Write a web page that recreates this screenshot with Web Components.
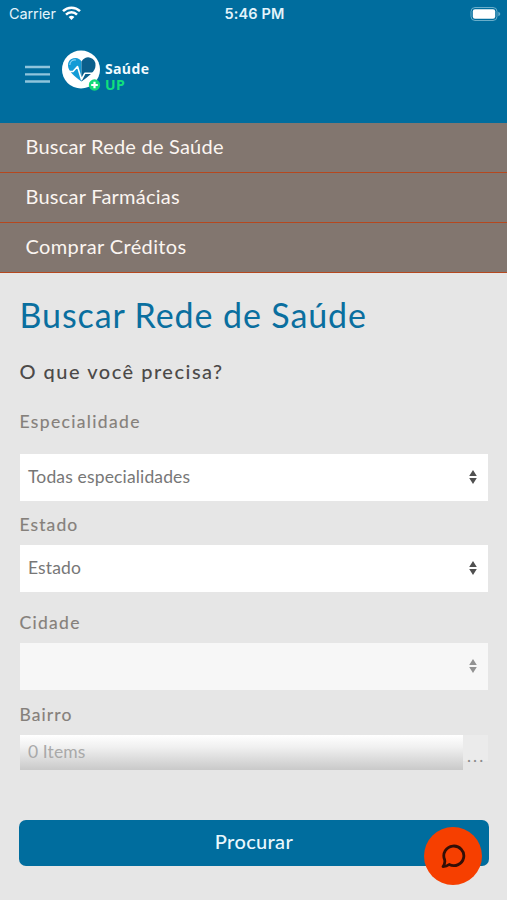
<!DOCTYPE html>
<html lang="pt-BR">
<head>
<meta charset="utf-8">
<meta name="viewport" content="width=device-width, initial-scale=1">
<title>Saúde UP</title>
<style>
body {
	margin: 0;
	background-color: #e6e6e6;
	font-family: Lato, "Open Sans", sans-serif;
}
</style>
</head>
<body>
<app-screen>
	<status-bar slot="top" carrier="Carrier" time="5:46 PM"></status-bar>
	<app-header slot="top"></app-header>
	<nav-menu slot="top">
		<nav-item style="letter-spacing: 0.22px">Buscar Rede de Saúde</nav-item>
		<nav-item style="letter-spacing: 0.25px">Buscar Farmácias</nav-item>
		<nav-item style="letter-spacing: 0.38px">Comprar Créditos</nav-item>
	</nav-menu>
	<search-form heading="Buscar Rede de Saúde" question="O que você precisa?">
		<select-field label="Especialidade" style="--label-gap: 21px; --label-spacing: 1.35px">Todas especialidades</select-field>
		<select-field label="Estado" style="margin-top: 13px">Estado</select-field>
		<select-field label="Cidade" style="margin-top: 20px; --label-spacing: 1.3px" disabled></select-field>
		<items-field label="Bairro">0 Items</items-field>
		<submit-button>Procurar</submit-button>
	</search-form>
	<chat-button slot="float"></chat-button>
</app-screen>

<script>
function define(name, html, setup) {
	const template = document.createElement('template');
	template.innerHTML = html;

	window.customElements.define(name, class extends HTMLElement {
		constructor() {
			super();
			this.root = this.attachShadow({mode: 'open'});
			this.root.appendChild(template.content.cloneNode(true));
			if(setup) {
				setup(this, this.root);
			}
		}
	});
}

define('app-screen', /*html*/`
	<style>
		:host {
			display: block;
			position: relative;
			width: 507px;
			height: 900px;
			overflow: hidden;
			background-color: #e6e6e6;
		}
	</style>
	<slot name="top"></slot>
	<slot></slot>
	<slot name="float"></slot>
`);

define('status-bar', /*html*/`
	<style>
		:host {
			display: grid;
			grid-template-columns: 1fr auto 1fr;
			align-items: center;
			box-sizing: border-box;
			height: 28px;
			padding: 0 6px 1px 9px;
			background-color: #006d9e;
			color: #e4f4fb;
			font: 14.5px Inter, sans-serif;
		}
		.left {
			display: flex;
			align-items: center;
			gap: 6px;
		}
		.carrier {
			letter-spacing: -0.1px;
		}
		.time {
			margin-right: 1px;
			font-weight: 600;
			font-size: 14.5px;
			letter-spacing: 0.1px;
		}
		.battery {
			justify-self: end;
		}
		svg {
			display: block;
		}
	</style>
	<div class="left">
		<span class="carrier"></span>
		<svg width="19" height="15" viewBox="0 0 19 15" fill="none" stroke="#fff" stroke-width="2.5">
			<path d="M1 5.2a12.2 12.2 0 0 1 17 0"/>
			<path d="M4 8.6a7.8 7.8 0 0 1 11 0"/>
			<path d="M9.5 14 6.6 11.1a4.1 4.1 0 0 1 5.8 0z" fill="#fff" stroke="none"/>
		</svg>
	</div>
	<span class="time"></span>
	<svg class="battery" width="31" height="16" viewBox="0 0 31 16">
		<rect x="1" y="1.5" width="26" height="13" rx="4" fill="none" stroke="#69aeca"/>
		<rect x="2.8" y="3.3" width="22.4" height="9.4" rx="2.2" fill="#fff"/>
		<path d="M28.3 5.8q2 .8 2 2.2t-2 2.2z" fill="#69aeca"/>
	</svg>
`, (host, root) => {
	root.querySelector('.carrier').textContent = host.getAttribute('carrier');
	root.querySelector('.time').textContent = host.getAttribute('time');
});

define('brand-logo', /*html*/`
	<style>
		:host {
			display: flex;
			font: bold 14px/15.5px "Open Sans", sans-serif;
			letter-spacing: 0.35px;
			color: #f2fbff;
		}
		svg {
			display: block;
		}
		.name {
			display: grid;
			align-content: start;
			margin: 11px 0 0 3px;
		}
		.up {
			color: #12e07c;
		}
	</style>
	<svg width="40" height="44" viewBox="0 0 40 44">
		<circle cx="19" cy="19.5" r="19" fill="#fff"/>
		<path d="M19.5 31.5C12 26 6 21 6 15.5a7.3 7.3 0 0 1 13.5-4z" fill="#139bd6"/>
		<path d="M19.5 31.5C27 26 33.5 21.5 33.5 15.5a7.4 7.4 0 0 0-14-4z" fill="#0b5f8c"/>
		<path d="M7.8 15c0-3.5 3-5.8 6.2-5" fill="none" stroke="#8bd3f2" stroke-width="1.2"/>
		<path d="M6 21.5h5l4.5-5 4 13 3.3-6.2h9" fill="none" stroke="#fff" stroke-width="1.6" stroke-linejoin="round"/>
		<circle cx="32.5" cy="35" r="5.7" fill="#12d978"/>
		<path d="M32.5 31.7v6.6M29.2 35h6.6" stroke="#fff" stroke-width="2.2"/>
	</svg>
	<div class="name">
		<span>Saúde</span>
		<span class="up">UP</span>
	</div>
`);

define('app-header', /*html*/`
	<style>
		:host {
			display: flex;
			align-items: flex-start;
			gap: 12px;
			box-sizing: border-box;
			height: 95px;
			padding: 22px 25px 0;
			background-color: #006d9e;
		}
		.menu {
			display: block;
			margin-top: 15px;
		}
	</style>
	<svg class="menu" width="25" height="19" viewBox="0 0 25 19" stroke="#8fc4dc" stroke-width="2.3">
		<path d="M0 2h25M0 9.3h25M0 16.5h25"/>
	</svg>
	<brand-logo></brand-logo>
`);

define('nav-menu', /*html*/`
	<style>
		:host {
			display: block;
		}
	</style>
	<slot></slot>
`);

define('nav-item', /*html*/`
	<style>
		:host {
			display: block;
			box-sizing: border-box;
			height: 50px;
			padding-left: 25.5px;
			border-bottom: 1px solid #b5481f;
			background-color: #82766f;
			color: #fbf5f1;
			font-size: 20px;
			line-height: 46px;
		}
	</style>
	<slot></slot>
`);

define('search-form', /*html*/`
	<style>
		:host {
			display: flex;
			flex-direction: column;
			padding: 21px 19px 0 20px;
		}
		h1 {
			margin: 0 0 0 -0.5px;
			color: #0a6f9f;
			font-size: 34px;
			font-weight: 400;
			line-height: 42px;
			letter-spacing: 0.9px;
		}
		h2 {
			margin: 23px 0 28px -0.5px;
			color: #4c4a49;
			font-size: 20px;
			font-weight: 500;
			line-height: 24px;
			letter-spacing: 1.5px;
		}
	</style>
	<h1></h1>
	<h2></h2>
	<slot></slot>
`, (host, root) => {
	root.querySelector('h1').textContent = host.getAttribute('heading');
	root.querySelector('h2').textContent = host.getAttribute('question');
});

const label_style = /*css*/`
	label {
		display: block;
		margin-left: -0.5px;
		color: #85807b;
		font-size: 17.5px;
		line-height: 22px;
		letter-spacing: var(--label-spacing, 1.1px);
		-webkit-text-stroke: 0.15px;
	}
`;

define('select-field', /*html*/`
	<style>
		${label_style}
		:host {
			display: block;
		}
		.box {
			display: flex;
			align-items: center;
			justify-content: space-between;
			box-sizing: border-box;
			width: 468px;
			height: 47px;
			margin-top: var(--label-gap, 9px);
			padding: 0 11px 2px 8px;
			background-color: #fff;
			color: #777;
			font-size: 17.5px;
			letter-spacing: 0.15px;
		}
		:host([disabled]) .box {
			background-color: #f7f7f7;
		}
		:host([disabled]) svg {
			opacity: 0.6;
		}
	</style>
	<label></label>
	<div class="box">
		<span><slot></slot></span>
		<svg width="8" height="14" viewBox="0 0 8 14" fill="#505050">
			<path d="M4 0l3.8 6H.2zM4 14L.2 8h7.6z"/>
		</svg>
	</div>
`, (host, root) => {
	root.querySelector('label').textContent = host.getAttribute('label');
});

define('items-field', /*html*/`
	<style>
		${label_style}
		:host {
			display: block;
			margin-top: 14px;
		}
		.row {
			display: flex;
			width: 468px;
			height: 35px;
			margin-top: 9px;
		}
		.value {
			flex: 1;
			padding-left: 8px;
			background: linear-gradient(#fff, #f0f0f0 35%, #c9c9c9);
			color: #a9a9a9;
			font-size: 17.5px;
			line-height: 33px;
			letter-spacing: 0.1px;
		}
		.more {
			width: 25px;
			height: 26px;
			background-color: #ebebeb;
			color: #8a8a8a;
			font-size: 17px;
			line-height: 41px;
			letter-spacing: 2.1px;
			text-indent: 4px;
		}
	</style>
	<label></label>
	<div class="row">
		<div class="value"><slot></slot></div>
		<div class="more">...</div>
	</div>
`, (host, root) => {
	root.querySelector('label').textContent = host.getAttribute('label');
});

define('submit-button', /*html*/`
	<style>
		:host {
			display: block;
			margin: 50px -1px 0;
		}
		button {
			display: block;
			width: 470px;
			height: 46px;
			padding: 0 0 3px;
			border: 0;
			border-radius: 7px;
			background-color: #006d9e;
			color: #e9f7fd;
			font: 500 20px/43px Lato, sans-serif;
			letter-spacing: 0.35px;
			cursor: pointer;
		}
	</style>
	<button><slot></slot></button>
`);

define('chat-button', /*html*/`
	<style>
		:host {
			position: absolute;
			left: 424px;
			top: 827px;
			display: grid;
			place-items: center;
			width: 58px;
			height: 58px;
			border-radius: 50%;
			background-color: #f63f00;
		}
	</style>
	<svg width="26" height="26" viewBox="0 0 26 26" fill="none" stroke="#330f06" stroke-width="2.8" stroke-linejoin="round">
		<path d="M4.6 16.6A10 9.8 0 1 1 9.2 21.5C7.4 22.9 5.3 23.5 3 23.5c1.5-1.9 2.3-4.2 1.6-6.9z"/>
	</svg>
`);
</script>
</body>
</html>
